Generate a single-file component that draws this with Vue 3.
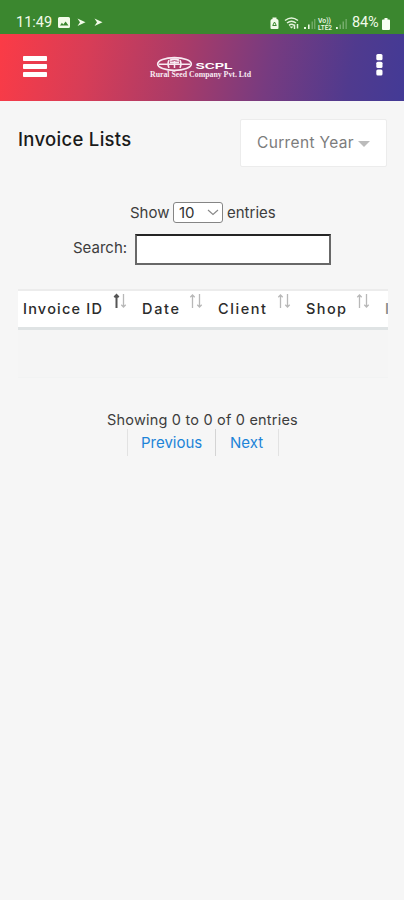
<script setup>
const columns = [
  { name: 'Invoice ID', width: 119, textWidth: 79, sorted: true },
  { name: 'Date', width: 76, textWidth: 37 },
  { name: 'Client', width: 88, textWidth: 48 },
  { name: 'Shop', width: 79, textWidth: 40 },
  { name: 'I', width: 110, textWidth: 4 },
]
</script>

<template>
  <div class="screen">
    <div class="status">
      <span class="time">11:49</span>
      <svg class="left-icons" width="46" height="14" viewBox="0 0 46 14" fill="#f2fbe9">
        <path fill-rule="evenodd" d="M1.500 1h9q1.500 0 1.500 1.500v8q0 1.500-1.500 1.500h-9Q0 12 0 10.500v-8Q0 1 1.500 1zM2 9.500h8.500L7.600 5.500 5.300 8.400 3.900 6.800z" />
        <path d="M19.500 2.500l8 3.800-8 3.700 2.500-3.700zM36.500 2.500l8 3.800-8 3.700L39 6.300z" />
      </svg>
      <svg class="right-icons" width="78" height="16" viewBox="0 0 78 16">
        <path d="M2.500 3V1.500h4V3q2 0 2 1.800V12q0 1-1 1h-6q-1 0-1-1V4.800Q.5 3 2.500 3z" fill="#f2fbe9" />
        <path d="M2.700 9.500l1.800-3.500 1.800 3.500z" fill="none" stroke="#3b872f" stroke-width="1" />
        <g fill="none" stroke="#e3f3db" stroke-width="1.500">
          <path d="M15 4.500q6.500-5 13 0M17 7q4.500-3.500 9 0M19 9.300q2.500-2 5 0" />
          <path d="M24.500 13V8.500M27.500 8v4.500" />
        </g>
        <path d="M19.500 10.500h4l-2 2z" fill="#e3f3db" />
        <g fill="#e9f7e2"><path d="M34 11h2v2h-2zM38 8.500h1.600V13H38z" /><path d="M41.500 5.500H43V13h-1.500zM44 3h1.400v10H44z" opacity=".3" /></g>
        <g fill="#e9f7e2" font-family="Roboto, sans-serif" font-size="7" font-weight="600">
          <text x="48" y="7" textLength="13" lengthAdjust="spacingAndGlyphs">Vo))</text>
          <text x="48" y="13.500" textLength="14" lengthAdjust="spacingAndGlyphs">LTE2</text>
        </g>
        <path d="M66 11h1.800v2H66z" fill="#e9f7e2" />
        <path d="M69.500 8.500H71V13h-1.500zM72.500 5.500H74V13h-1.500zM75.500 3h1.300v10h-1.300z" fill="#e9f7e2" opacity=".35" />
      </svg>
      <span class="percent">84%</span>
      <svg class="battery" width="8" height="12" viewBox="0 0 8 12"><path d="M2.500 0h3v1.500H7q1 0 1 1V11q0 1-1 1H1q-1 0-1-1V2.500q0-1 1-1h1.500z" fill="#f7fff2" /></svg>
    </div>

    <header class="bar">
      <svg class="menu" width="24" height="21" viewBox="0 0 24 21" fill="#fff">
        <rect width="24" height="5" rx=".8" /><rect y="8" width="24" height="5" rx=".8" /><rect y="16" width="24" height="5" rx=".8" />
      </svg>
      <svg class="logo" width="104" height="26" viewBox="0 0 104 26" fill="#fff">
        <g fill="none" stroke="#f8eaf2">
          <ellipse cx="25.500" cy="8" rx="16.800" ry="6.300" stroke-width="1.700" />
          <path d="M10 8.300h31M20 4q-2 4 0 8M31 4q2 4 0 8M25.500 5v7" stroke-width="1.500" />
          <path d="M21 4.300q4.500-2 9 0M21 6.500h9" stroke-width="2" />
        </g>
        <text x="46.500" y="12.500" font-family="Liberation Sans, sans-serif" font-size="8.500" font-weight="700" textLength="37" lengthAdjust="spacingAndGlyphs">SCPL</text>
        <text x="1" y="21" font-family="Liberation Serif, serif" font-size="8.500" font-weight="700" textLength="101" lengthAdjust="spacingAndGlyphs" fill="#f7eaf3">Rural Seed Company Pvt. Ltd</text>
      </svg>
      <svg class="more" width="7" height="24" viewBox="0 0 7 24" fill="#fff">
        <rect x=".3" y="1" width="6.200" height="6.200" rx="1.500" /><rect x=".3" y="8.700" width="6.200" height="6.200" rx="1.500" /><rect x=".3" y="16.400" width="6.200" height="6.200" rx="1.500" />
      </svg>
    </header>

    <main>
      <div class="heading">
        <h1>Invoice Lists</h1>
        <button class="year"><span>Current Year</span><i></i></button>
      </div>

      <div class="length">
        <span class="show">Show</span>
        <span class="select">10
          <svg width="12" height="7" viewBox="0 0 12 7" fill="none" stroke="#888" stroke-width="1.100"><path d="M1 1l5 4.500L11 1" /></svg>
        </span>
        <span class="entries">entries</span>
      </div>
      <label class="search"><span>Search:</span><input type="text" /></label>

      <div class="table">
        <div class="head">
          <div v-for="c in columns" :key="c.name" class="cell" :style="{ width: c.width + 'px' }">
            <svg class="label" :width="c.textWidth" height="22">
              <text x="0" y="17" :textLength="c.textWidth">{{ c.name }}</text>
            </svg>
            <svg v-if="c.name !== 'I'" class="sort" :class="{ sorted: c.sorted }" width="14" height="16" viewBox="0 0 14 16" fill="none">
              <path class="up" d="M3.500 15V2M1.300 4.200L3.500 2l2.200 2.200" />
              <path class="down" d="M10.500 1v13M8.300 11.800l2.200 2.200 2.200-2.200" />
            </svg>
          </div>
        </div>
        <div class="empty"></div>
      </div>

      <div class="info">Showing 0 to 0 of 0 entries</div>
      <nav class="pager"><a class="prev">Previous</a><a class="next">Next</a></nav>
    </main>
  </div>
</template>

<style>
body { background: #f6f6f6; }
</style>

<style scoped>
* { box-sizing: border-box; }
.screen { width: 404px; height: 900px; overflow: hidden; background: #f6f6f6; font-family: Inter, sans-serif; color: #3d3d3d; }
.status { display: flex; height: 34px; padding: 13px 14px 0 16px; background: #3b872f; color: #f2fbe9; font: 14.500px/20px Roboto, sans-serif; }
.time { width: 42px; }
.left-icons { margin-top: 3px; }
.right-icons { margin: 3px 4px 0 auto; }
.percent { width: 28px; letter-spacing: -.1px; }
.battery { margin: 5px 0 0 2px; }
.bar { display: flex; height: 67px; background: linear-gradient(100deg, #fb3b46 0%, #d73d57 22%, #a93b68 45%, #773b80 66%, #503a8e 86%, #433a96 100%); }
.menu { margin: 22px 0 0 23px; }
.logo { margin: 22px 0 0 102px; }
.more { margin: 19px 0 0 123px; }
main { padding: 18px 17px 0 18px; }
.heading { display: flex; justify-content: space-between; height: 72px; }
h1 { margin: 8px 0 0; font-size: 18.500px; font-weight: 500; line-height: 24px; letter-spacing: .3px; color: #1a1a1a; }
.year { display: flex; align-items: center; justify-content: space-between; width: 147px; height: 48px; padding: 0 16px 1px; border: 1px solid #ececec; border-radius: 2px; background: #fff; font: 15.500px Inter, sans-serif; letter-spacing: .35px; color: #7c7c7c; white-space: nowrap; }
.year i { border: 6px solid transparent; border-top-color: #bbb; border-bottom: 0; margin-top: 2px; }
.length { display: flex; align-items: center; height: 42px; padding-left: 112px; font-size: 15px; }
.show { width: 43px; }
.select { display: flex; align-items: center; justify-content: space-between; width: 50px; height: 21px; padding: 0 3px 0 5px; border: 1px solid #858585; border-radius: 3px; background: #fff; color: #333; }
.entries { margin-left: 4px; }
.search { display: flex; align-items: center; height: 32px; padding-left: 55px; font-size: 15px; }
.search span { width: 62px; margin-top: -3px; }
.search input { width: 196px; height: 31px; border: 2px solid #686868; border-top-color: #252525; border-radius: 0; background: #fff; }
.table { width: 370px; margin-top: 24px; overflow: hidden; }
.head { display: flex; width: 370px; height: 41px; border-top: 2px solid #ececec; border-bottom: 3px solid #dfe3e4; background: #fff; }
.cell { display: flex; flex: none; justify-content: space-between; padding: 6px 3px 0 5px; }
.label { overflow: visible; }
.label text { font-size: 14.500px; font-weight: 500; fill: #2b2b2b; }
.cell:last-child { width: 8px; }
.cell:last-child text { fill: #858585; }
.sort { margin-top: -4px; margin-right: 7px; stroke: #b8b8b8; stroke-width: 1.300; }
.sort.sorted .up { stroke: #555; stroke-width: 2; }
.empty { height: 48px; background: #f5f5f5; border-bottom: 1px solid #f2f3f3; }
.info { margin-top: 33px; padding-left: 89px; font-size: 14.500px; line-height: 18px; letter-spacing: .2px; white-space: nowrap; }
.pager { display: flex; height: 27px; margin-left: 109px; width: 152px; border: solid #e2e2e2; border-width: 0 1px; color: #1d84d8; font-size: 15px; line-height: 28px; }
.prev { width: 88px; padding-left: 13px; border-right: 1px solid #d4d4d4; }
.next { padding-left: 14px; }
</style>
